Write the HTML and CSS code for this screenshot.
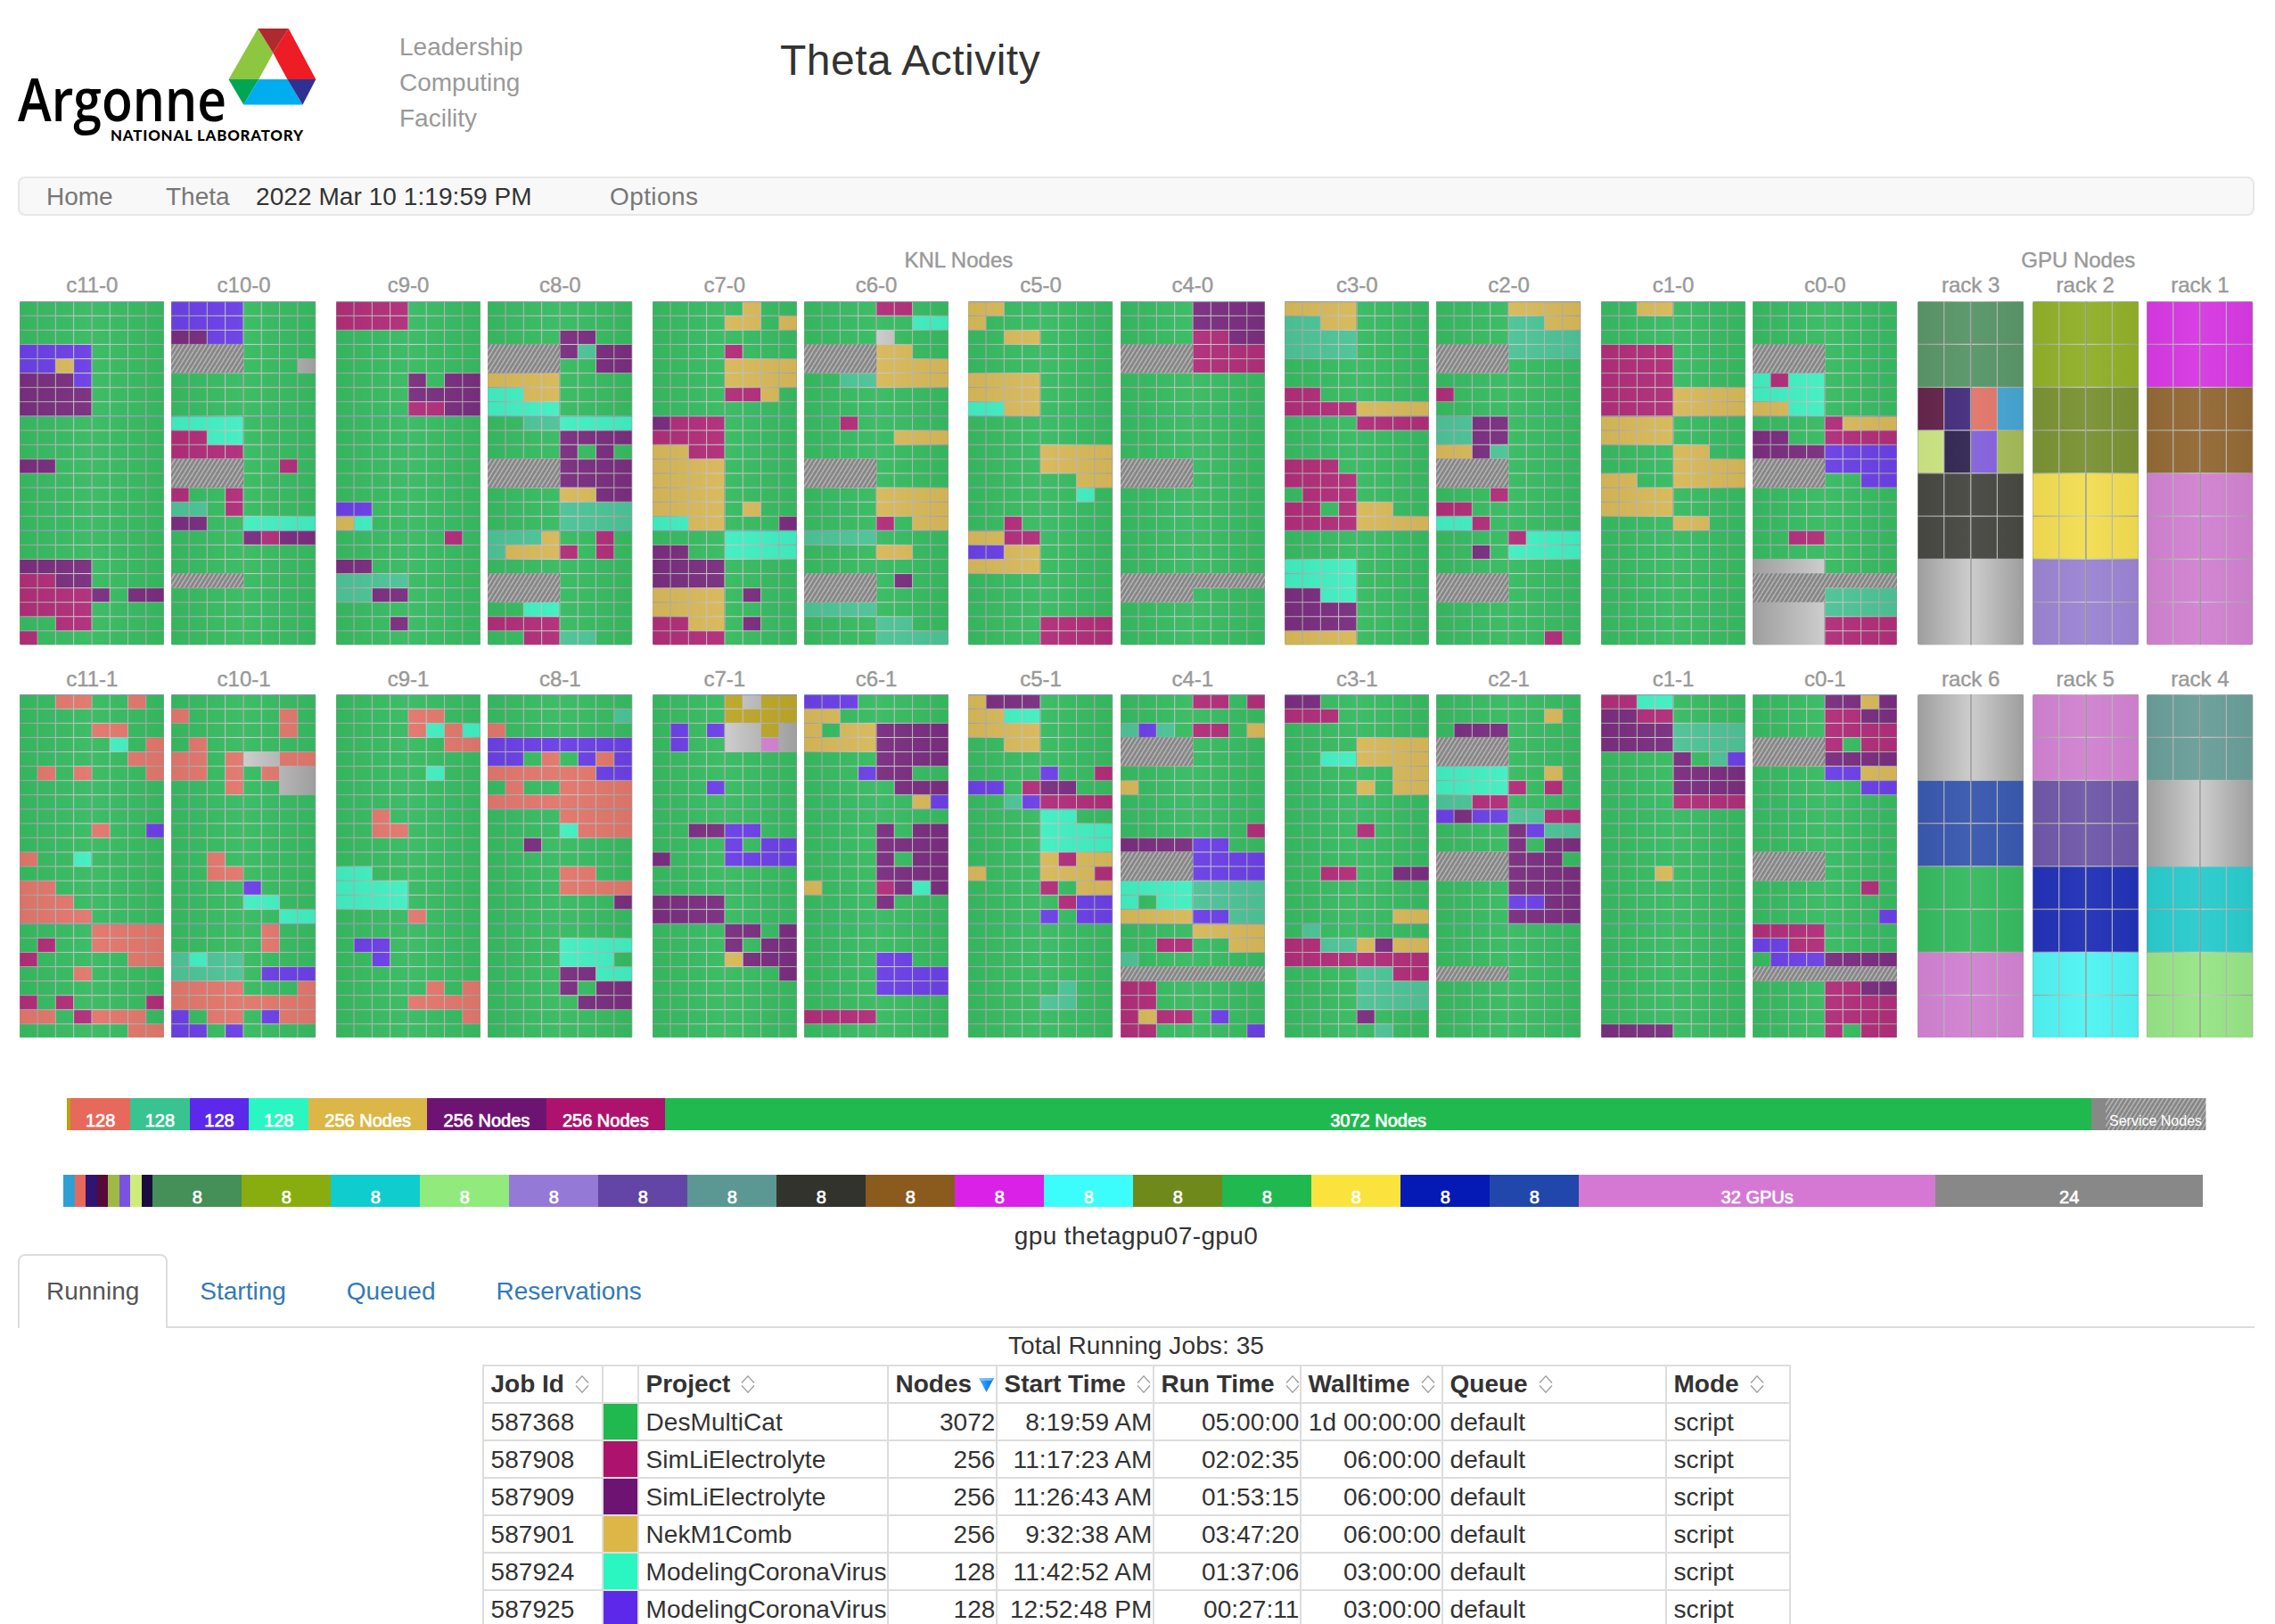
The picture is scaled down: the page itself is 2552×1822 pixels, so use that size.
FILE: index.html
```html
<!DOCTYPE html>
<html lang="en">
<head>
<meta charset="utf-8">
<title>Theta Activity</title>
<link rel="stylesheet" href="styles.css">
</head>
<body>
<header class="masthead">
  <svg class="logo" viewBox="20 32 336 128" width="336" height="128">
    <polygon fill="#8dc63f" points="289.3,32 306.5,59.5 290.2,89 256.5,89"/>
    <polygon fill="#ee1c25" points="323.7,32 354.3,89 322.3,89 306.3,59.3"/>
    <polygon fill="#ae2a2f" points="289.3,32 323.7,32 306.3,59.3"/>
    <polygon fill="#00a651" points="256.5,89 290.2,89 273.2,117.5"/>
    <polygon fill="#00adef" points="290.2,89 322.3,89 339.5,117.5 273.2,117.5"/>
    <polygon fill="#2e3192" points="322.3,89 354.3,89 339.5,117.5"/>
    <text class="logo-name" x="20" y="135.6" textLength="234" lengthAdjust="spacingAndGlyphs">Argonne</text>
    <text class="logo-sub" x="124" y="158" textLength="216" lengthAdjust="spacing">NATIONAL LABORATORY</text>
  </svg>
  <div class="facility">Leadership<br>Computing<br>Facility</div>
  <h1 class="title">Theta Activity</h1>
</header>
<nav class="navbar">
  <a class="nav-home">Home</a><a class="nav-theta">Theta</a><span class="nav-time">2022 Mar 10 1:19:59 PM</span><a class="nav-options">Options</a>
</nav>
<svg class="defs" width="0" height="0">
  <defs>
    <linearGradient id="metal" x1="0" x2="1" y1="0" y2="0">
      <stop offset="0" stop-color="#9e9e9e"/><stop offset=".5" stop-color="#cdcdcd"/><stop offset="1" stop-color="#9e9e9e"/>
    </linearGradient>
    <pattern id="hatch" width="5" height="8" patternUnits="userSpaceOnUse">
      <rect width="5" height="8" fill="#868686"/>
      <path d="M-5 8L0 0M0 8L5 0M5 8L10 0" stroke="#b4b4b4" stroke-width="1.5"/>
    </pattern>
    <linearGradient id="blue" x1="0" x2="1" y1="0" y2="0">
      <stop offset="0" stop-color="#5fb4fb"/><stop offset=".5" stop-color="#1a8cf5"/><stop offset="1" stop-color="#0a6fe0"/>
    </linearGradient>
  </defs>
</svg>
<main>
  <section class="floor">
    <div class="knl">
      <h2>KNL Nodes</h2>
      <div class="row row-top" id="knl0"></div>
      <div class="row row-bottom" id="knl1"></div>
    </div>
    <div class="gpu">
      <h2>GPU Nodes</h2>
      <div class="row row-top" id="gpu0"></div>
      <div class="row row-bottom" id="gpu1"></div>
    </div>
  </section>
  <div class="bar bar-knl" id="barKnl"></div>
  <div class="bar bar-gpu" id="barGpu"></div>
  <div class="status">gpu thetagpu07-gpu0</div>
  <ul class="tabs">
    <li class="active">Running</li><li>Starting</li><li>Queued</li><li>Reservations</li>
  </ul>
  <table class="jobs">
    <caption>Total Running Jobs: 35</caption>
    <colgroup><col class="w-id"><col class="w-color"><col class="w-project"><col class="w-nodes"><col class="w-start"><col class="w-run"><col class="w-wall"><col class="w-queue"><col class="w-mode"></colgroup>
    <thead><tr><th>Job Id</th><th class="plain"></th><th>Project</th><th class="sorted">Nodes</th><th>Start Time</th><th>Run Time</th><th>Walltime</th><th>Queue</th><th>Mode</th></tr></thead>
    <tbody id="jobs"></tbody>
  </table>
</main>
<script src="app.js"></script>
</body>
</html>
```
FILE: styles.css
```css
* { box-sizing: border-box; }
body {
  margin: 0;
  padding: 0 23px 0 20px;
  height: 1822px;
  overflow: hidden;
  background: #fff;
  color: #333;
  font: 28px/40px "Liberation Sans", Arial, sans-serif;
}
h1, h2, ul { margin: 0; padding: 0; font-weight: 400; }
.masthead { display: flex; height: 198px; padding-top: 32px; }
.logo { flex: none; overflow: visible; }
.logo-name { font: 600 67px "Open Sans", sans-serif; fill: #000; }
.logo-sub { font: 900 16.8px Lato, sans-serif; fill: #000; }
.facility { flex: none; width: 427px; margin-left: 92px; padding-top: 1px; color: #999; }
.title { padding-top: 9px; font-size: 48px; line-height: 53px; letter-spacing: .48px; }
.navbar {
  display: flex;
  height: 44px;
  padding: 1px 0 0 30px;
  border: 2px solid #e7e7e7;
  border-radius: 8px;
  background: #f8f8f8;
  color: #777;
}
.nav-home { width: 134px; }
.nav-theta { width: 101px; }
.nav-time { width: 397px; color: #333; letter-spacing: .07px; }
.nav-options { letter-spacing: .4px; }
.defs { display: block; }
.floor { display: flex; padding: 35.6px 0 0 2.2px; height: 922px; }
.knl { flex: none; width: 2106.3px; margin-right: 22.5px; }
.gpu { flex: none; width: 376.6px; }
.floor h2, .rack-label { color: #999; font-size: 24px; line-height: 28px; text-align: center; -webkit-text-stroke: .4px #999; }
.gpu h2 { padding-right: 16px; }
.row, .pair { display: flex; justify-content: space-between; }
.pair { width: 332.6px; }
.rack svg { display: block; }
.row-top .rack-label { margin-bottom: 4.7px; }
.row-bottom { margin-top: 23.9px; }
.row-bottom .rack-label { margin-bottom: 3px; }
.bar { display: flex; height: 36px; color: #fff; font-size: 20px; line-height: 20px; overflow: hidden; }
.bar-knl { width: 2399.6px; margin: 68px 0 0 55.3px; }
.bar-gpu { width: 2400px; margin: 50px 0 0 51.2px; }
.seg { flex: none; padding-top: 15px; text-align: center; white-space: nowrap; -webkit-text-stroke: .7px #fff; }
.seg-service { padding-top: 0; }
.seg-service svg { display: block; }
.seg-service text { font-size: 16px; fill: #fff; }
.status { margin-top: 13px; text-align: center; letter-spacing: .38px; }
.tabs { display: flex; gap: 4px; height: 83px; list-style: none; border-bottom: 2px solid #ddd; color: #337ab7; }
.tabs li { height: 83px; padding: 20px 30px 0; border: 2px solid transparent; border-bottom: 0; }
.tabs .active { color: #555; background: #fff; border-color: #ddd; border-radius: 8px 8px 0 0; }
.jobs { width: 1468px; margin: 0 auto; table-layout: fixed; border-collapse: collapse; }
.jobs caption { height: 41px; letter-spacing: .1px; }
.jobs th, .jobs td { height: 42px; padding: 1px 0 0 8px; border: 2px solid #ddd; text-align: left; white-space: nowrap; line-height: 38px; }
.jobs th { padding-top: 0; }
.jobs td { letter-spacing: .07px; }
.jobs .num { padding-left: 0; padding-right: 0; text-align: right; }
.jobs .swatch, .jobs .plain { padding: 0; }
.jobs th svg { margin-left: 12px; vertical-align: -1px; }
.jobs .sorted svg { margin-left: 8px; vertical-align: 0; }
.w-id { width: 134px; }
.w-color { width: 40px; }
.w-project { width: 280px; }
.w-nodes { width: 122px; }
.w-start { width: 176px; }
.w-run { width: 165px; }
.w-wall { width: 159px; }
.w-queue { width: 251px; }
.w-mode { width: 139px; }
```
FILE: app.js
```js
// Job colours, keyed by the letter used in the node maps below.
const C = { '.': '#1fb950', m: '#ad136c', p: '#6d1473', y: '#dcb747', c: '#2af6c1', v: '#5c29eb',
  t: '#38c390', r: '#e7695b', g: '#bca20f', k: '#d478d4' };

// Each cabinet: 24 rows of 8 nodes; trailing nodes of the main job are omitted.
// s = service node, _ = idle node.
const cabinets = [[
  ['c11-0', '///vvvv/vvyv/pppv/pppp/pppp////pp///////pppp/mmpp/mmmmp.pp/mmmm/..mm/m'],
  ['c10-0', 'vvvv/vvvv/ppvv/ssss/ssss..._////cccc/mmcc/mmmm/ssss..m./ssss/m..m/tt.m/pp..cccc/....pmpp///ssss////'],
  ['c9-0', 'mmmm/mmmm////....p.pp/....pppp/....mmpp///////vv/yc/......m.//pp/tttt/ttpp//...p/'],
  ['c8-0', '//....pp/ssssptpp/ssss..pp/yyyy/ccyy/cccc/..ttcccc/....pppp/....p.p./sssspppp/sssspppp/....yypp/....tttt/....tttt/ttty..m./tyyym.m.//ssss/ssss/..cc/mmmm/..mmtt'],
  ['c7-0', '.....y/....yy.y//....m/....yyyy/....yyyy/....mmy//pmmm/mmmm/yymm/yyyy/yyyy/yyyy/yyyy.y/ccyy...p/....cccc/pp..cccc/pppp/pppp/yyyy.p/yyyy/mmyy.p/mmmm'],
  ['c6-0', '....mm/......cc/...._/ssssyy/ssssyyyy/..ttyyyy///..m/.....yyy//ssss/ssss/....yyyy/....yyyy/....m.yy/tttt/....yy//ssss.p/ssss/tttt/....tt/....tttt'],
  ['c5-0', 'yy/y/..yy///yyyy/yyyy/ccyy///....yyyy/....yyyy/......yy/......c//..m/yymm/vvyy/yyyy////....mmmm/....mmmm'],
  ['c4-0', '....pppp/....pppp/....mmpp/ssssmmmm/ssssmmmm///////ssss/ssss///////ssssssss/ssss///'],
  ['c3-0', 'yyyy/ttyy/tttt/tttt///mm/mmmmyyyy/....mmmm///mmm/mmmm/.mmm/mm.myy/mmmmyyyy///cccc/cccc/ppcc/pppp/pppp/yyyy'],
  ['c2-0', '....yyyy/....ttyy/....tttt/sssstttt/ssss//m//ttpp/ttpp/yypt/ssss/ssss/...m/mm/ccm/....mccc/..p.cccc//ssss/ssss///......m'],
  ['c1-0', '..yy///mmmm/mmmm/mmmm/mmmmyyyy/mmmmyyyy/yyyy/yyyy/....yy/....yyyy/yy..yyyy/yyyy/yyyy/....yy////////'],
  ['c0-0', '///ssss/ssss/cmcc/cccc/yycc/....myyy/pp..mmmm/ppppvvvv/ssssvvvv/ssss..vv////..mm//____/ssssssss/sssstttt/____tttt/____mmmm/____mmmm']
], [
  ['c11-1', '..rr..r//....rr/.....c.r/......rr/.r.r...r////....r..v//r..c//rr/rrr/rrrr/....rrrr/.m..rrrr/m.....rr/...r//m.m....m/rr.mrrr/......rr'],
  ['c10-1', '/r.....r/......r/.r/rr.r__rr/rr.r.r__/...r..__/////..r/..rr/....v/....cc/......cc/.....r/.....r/tctt/tttt.vvv/rrrr...r/rrrrrrrr/v.rr.vrr/vv.v'],
  ['c9-1', '/....rr/....rcrc/......rr//.....c///..r/..rr///cc/cccc/cccc/....r//.vv/..v//.....r.r/....rrrr/.......r/'],
  ['c8-1', '/.......t/r/vvvvvvvv/vv.r.vrv/rrrrrrvv/.r..rrrr/rrrrrrrr/....rrrr/....crrr/..p//....rr/....rrrr/.......p///....cccc/....ccc/....ppcc/....p.pp/.....ppp//'],
  ['c7-1', '....g_gg/....gggg/.v.v__g_/.v..__k_///...v///..ppvv/....v.vv/p...vvvv///pppp/pppp/....pp.p/....p.pp/....yppp/.......p////'],
  ['c6-1', 'vvv/yy/y.yypppp/yyyypppp/....pppp/...vpp/.....ppp/......yv//....p.pp/....pppp/....p.pp/....pppp/y...mpcp/....p////....vv/....vvvv/....vvvv//mmmm/'],
  ['c5-1', 'yppp/yycc/yyyy/..yy//....v..m/vv.mpp/..tvmmmm/....cc/....cccc/....cccc/....ymyy/y...yyym/....m.yy/.....mvv/....v.vv/////.....t/....tt//'],
  ['c4-1', '....mm.m//tvt.mm.y/ssss/ssss//y///.......m/ppppvv/ssssvvvv/ssssvvvv/cccctttt/c.cctttt/yyyyvvtt/....yyyy/..mm..yy/t/ssssssss/mm/mm/mymm.v/mm.....v'],
  ['c3-1', 'pp/mmm//....yyyy/..ccyyyy/......yy/....y.yy///....m///..mm..pp///......yy/.t/mmttypyy/mmmmmmmm/....ttmm/....tttt/....tttt/....p/.....t'],
  ['c2-1', '/......y/.ppp/ssss/ssss/cccc..y/ccccm.m/ttmm/vpvvttmm/....pvtt/....p.pp/ssssppp/sssspppp/....pppp/....vvpp/....pppp////ssss////'],
  ['c1-1', 'mmcc/ppmm/pppptttt/pppptttt/....p.tv/....pppp/....pppp/....mmmm/////...y///////////pppp'],
  ['c0-1', '....ppyp/....mmpp/....mmmm/ssssm.mm/sssspppp/....vvyy/......vv/////ssss/ssss/......m//.......v/mmmm/vvmm/.vvvpppp/ssssssss/....mmpp/....mmmm/....mmmm/....m.mm']
]];

const W = 162.3, H = 385.6;
const rect = (x, y, w, h, fill, extra = '') =>
  `<rect x="${x.toFixed(2)}" y="${y.toFixed(2)}" width="${w.toFixed(2)}" height="${h.toFixed(2)}" fill="${fill}" ${extra}/>`;

function rack(name, w, body) {
  return `<div class="rack"><div class="rack-label">${name}</div><svg width="${w}" height="${H}">` +
    rect(0, 0, w, H, 'url(#metal)', 'rx="2"') + body + '</svg></div>';
}

function cabinet([name, map]) {
  const cw = W / 8, ch = H / 24;
  let body = '', hatch = '';
  const rows = map.split('/');
  for (let r = 0; r < 24; r++) {
    const row = (rows[r] || '').padEnd(8, '.');
    for (let c = 0; c < 8; c++) {
      const k = row[c];
      if (k === '_' || k === 's') continue;
      body += rect(c * cw + .3, r * ch + .8, cw - 1.05, ch - 1.1, C[k], 'fill-opacity=".82"');
    }
    const n = row.match(/^s*/)[0].length;
    if (n) hatch += rect(0, r * ch, n * cw, ch + .2, 'url(#hatch)');
  }
  for (const r of [0, 8, 16]) body += rect(0, r * ch, W, 1.2, '#7a8fc0', 'fill-opacity=".6"');
  body += rect(W / 2 - .9, 0, 1, H, '#888', 'fill-opacity=".6"');
  return rack(name, W, body + hatch);
}

cabinets.forEach((line, i) => {
  let html = '';
  for (let p = 0; p < 12; p += 2) html += `<div class="pair">${cabinet(line[p])}${cabinet(line[p + 1])}</div>`;
  document.getElementById('knl' + i).innerHTML = html;
});

const mixed = ['#560a37', '#301472', '#e7695b', '#2f9fd4', '#cfec79', '#190c3e', '#7a52e0', '#9fb945'];
const gpuRacks = [[
  ['rack 3', ['#458f58', mixed, '#33332d', null]],
  ['rack 2', ['#89ad0e', '#6f8a1b', '#fbe33d', '#9579d6']],
  ['rack 1', ['#da21e8', '#8b5a1d', C.k, C.k]]
], [
  ['rack 6', [null, '#2147ad', C['.'], C.k]],
  ['rack 5', [C.k, '#6245a4', '#0519b5', '#3cfdfb']],
  ['rack 4', ['#5b9893', null, '#0fcdcf', '#90eb7c']]
]];
gpuRacks.forEach((line, i) => {
  document.getElementById('gpu' + i).innerHTML = line.map(([name, nodes]) => {
    const w = 119.3, cw = w / 4, ch = H / 8;
    let body = '';
    nodes.forEach((fill, n) => {
      if (!fill) return;
      for (let j = 0; j < 8; j++) {
        body += rect((j % 4) * cw + .5, (n * 2 + (j >> 2)) * ch + .7, cw - 1.2, ch - 1.2,
          Array.isArray(fill) ? fill[j] : fill, 'fill-opacity=".82"');
      }
    });
    return rack(name, w, body + rect(w / 2 - .6, 0, 1.8, H, '#888', 'fill-opacity=".6"'));
  }).join('');
});

const seg = (w, color, label = '') => `<div class="seg" style="width:${w}px;background:${color}">${label}</div>`;
document.getElementById('barKnl').innerHTML =
  seg(4, C.g) + seg(66.7, C.r, '128') + seg(66.7, C.t, '128') + seg(66.7, C.v, '128') + seg(66.7, C.c, '128') +
  seg(133.3, C.y, '256 Nodes') + seg(133.3, C.p, '256 Nodes') + seg(133.3, C.m, '256 Nodes') +
  seg(1600.4, C['.'], '3072 Nodes') + seg(16, '#888') +
  '<div class="seg seg-service" style="width:112.5px"><svg width="112.5" height="36">' +
  rect(0, 0, 112.5, 36, 'url(#hatch)') + '<text x="4" y="31">Service Nodes</text></svg></div>';
document.getElementById('barGpu').innerHTML =
  ['#2f9fd4', '#e7695b', '#301472', '#560a37', '#9fb945', '#7a52e0', '#cfec79', '#190c3e'].map(c => seg(12.5, c)).join('') +
  ['#458f58', '#89ad0e', '#0fcdcf', '#90eb7c', '#9579d6', '#6245a4', '#5b9893', '#33332d', '#8b5a1d', '#da21e8',
    '#3cfdfb', '#6f8a1b', '#1fb950', '#fbe33d', '#0519b5', '#2147ad'].map(c => seg(100, c, '8')).join('') +
  seg(400, C.k, '32 GPUs') + seg(300, '#888', '24');

// Sort indicators
document.querySelectorAll('.jobs th:not(.plain)').forEach(th => {
  th.innerHTML += th.classList.contains('sorted')
    ? '<svg width="17" height="16"><path d="M0 0H17L8.5 16Z" fill="url(#blue)"/><path d="M0 0H17L14 3H3Z" fill="#a8d8ff" fill-opacity=".6"/></svg>'
    : '<svg width="16" height="20"><path d="M1 8.5L8 .8L15 8.5M1 11.5L8 19.2L15 11.5" fill="none" stroke="#999" stroke-width="1.2"/></svg>';
});

document.getElementById('jobs').innerHTML = [
  ['587368', C['.'], 'DesMultiCat', 3072, '8:19:59 AM', '05:00:00', '1d 00:00:00'],
  ['587908', C.m, 'SimLiElectrolyte', 256, '11:17:23 AM', '02:02:35', '06:00:00'],
  ['587909', C.p, 'SimLiElectrolyte', 256, '11:26:43 AM', '01:53:15', '06:00:00'],
  ['587901', C.y, 'NekM1Comb', 256, '9:32:38 AM', '03:47:20', '06:00:00'],
  ['587924', C.c, 'ModelingCoronaVirus', 128, '11:42:52 AM', '01:37:06', '03:00:00'],
  ['587925', C.v, 'ModelingCoronaVirus', 128, '12:52:48 PM', '00:27:11', '03:00:00']
].map(([id, color, project, ...nums]) =>
  `<tr><td>${id}</td><td class="swatch" style="background:${color}"></td><td>${project}</td>` +
  nums.map(n => `<td class="num">${n}</td>`).join('') + '<td>default</td><td>script</td></tr>').join('');
```
